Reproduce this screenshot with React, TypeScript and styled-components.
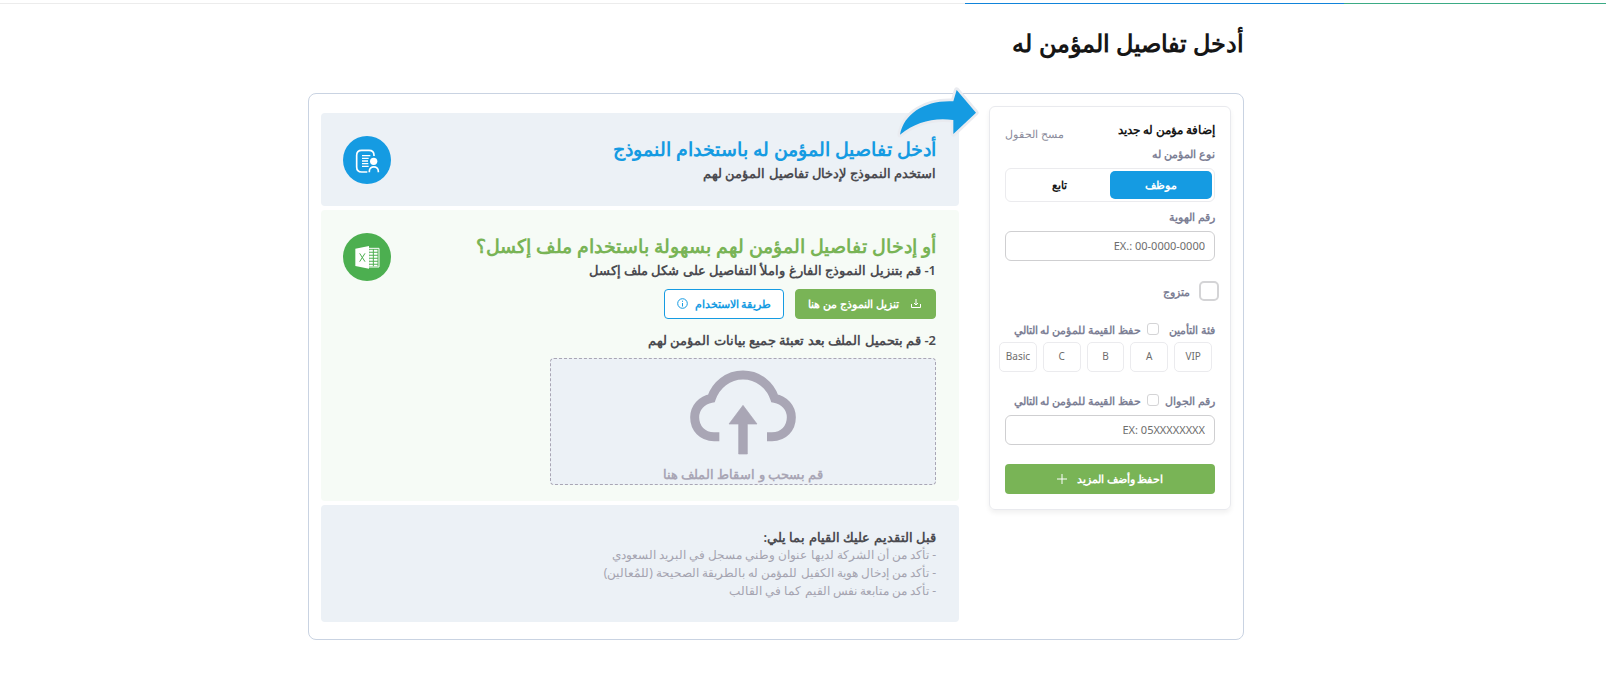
import React, { useState } from 'react';
import styled, { createGlobalStyle } from 'styled-components';

const blue = '#159be2';
const green = '#79b456';

const Global = createGlobalStyle`
  * { box-sizing: border-box; }
  body {
    margin: 0;
    background: #fff;
    color: #161616;
    font-family: 'Noto Sans', sans-serif;
    font-size: 11px;
  }
  h1, h2, h3, p, ul, fieldset { margin: 0; padding: 0; border: 0; list-style: none; }
  button, input { font-family: inherit; font-size: inherit; margin: 0; }
  svg { display: block; flex: none; }
`;

const ProgressBar = styled.div`
  display: flex;
  height: 4px;
  align-items: flex-end;
`;

const ProgressPart = styled.span<{ $color: string; $share: number }>`
  flex: ${(p) => p.$share} 1 0;
  height: 1px;
  background: ${(p) => p.$color};
`;

const Page = styled.main`
  max-width: 990px;
  margin: 0 auto;
  padding: 21px 54px 40px 0;
`;

const Title = styled.h1`
  font-size: 24px;
  font-weight: 600;
  line-height: 36px;
`;

const Panel = styled.div`
  position: relative;
  display: flex;
  align-items: flex-start;
  gap: 30px;
  margin-top: 32px;
  padding: 12px 12px 17px;
  border: 1px solid #c9d3e2;
  border-radius: 8px;
`;

const ArrowSvg = styled.svg`
  position: absolute;
  top: -10px;
  right: 253px;
`;

const Card = styled.form`
  flex: 0 0 242px;
  display: flex;
  flex-direction: column;
  padding: 11px 15px 15px;
  border: 1px solid #e9eaee;
  border-radius: 6px;
  box-shadow: 0 3px 5px rgba(0, 0, 0, 0.06);
  color: #7d8095;
`;

const CardHead = styled.div`
  display: flex;
  justify-content: space-between;
  align-items: flex-end;
`;

const CardTitle = styled.h2`
  color: #161616;
  font-size: 12px;
  font-weight: 600;
  line-height: 24px;
`;

const ClearButton = styled.button`
  padding: 0;
  border: 0;
  background: none;
  color: #8b8c9b;
  line-height: 16px;
  cursor: pointer;
`;

const Field = styled.div<{ $top?: number }>`
  display: flex;
  flex-direction: column;
  gap: 2px;
  margin-top: ${(p) => p.$top ?? 0}px;
`;

const FieldHead = styled.div`
  display: flex;
  align-items: center;
  gap: 6px;
  height: 24px;
  padding-bottom: 2px;
  font-weight: 600;
  white-space: nowrap;
`;

const FieldName = styled.label`
  min-width: 50px;
`;

const KeepLabel = styled.label`
  display: flex;
  align-items: center;
  gap: 6px;
`;

const Check = styled.input.attrs({ type: 'checkbox' })<{ $size: number }>`
  appearance: none;
  flex: none;
  width: ${(p) => p.$size}px;
  height: ${(p) => p.$size}px;
  border: ${(p) => (p.$size > 16 ? 2 : 1)}px solid #d4d4d6;
  border-radius: ${(p) => (p.$size > 16 ? 5 : 3)}px;
  background: #fff;
  &:checked { background: ${blue}; }
`;

const Segments = styled.div`
  display: flex;
  height: 34px;
  padding: 2px;
  border: 1px solid #ebebee;
  border-radius: 6px;
`;

const Choice = styled.label`
  position: relative;
  flex: 1;
  display: flex;
  align-items: center;
  justify-content: center;
  padding-bottom: 2px;
  border-radius: 5px;
  color: #161616;
  font-weight: 600;
  cursor: pointer;
  &:has(input:checked) { background: ${blue}; color: #fff; }
`;

const HiddenInput = styled.input`
  position: absolute;
  inset: 0;
  opacity: 0;
`;

const TextInput = styled.input`
  width: 100%;
  height: 30px;
  padding: 0 9px 2px;
  border: 1px solid #cfcfd1;
  border-radius: 6px;
  text-align: right;
  &::placeholder { color: #6d6d6d; opacity: 1; }
`;

const MarriedLabel = styled.label`
  display: flex;
  align-items: center;
  gap: 9px;
  margin: 20px -4px 0 0;
  font-weight: 600;
`;

const Classes = styled.div`
  display: flex;
  gap: 6px;
  margin: -2px 3px 0 -6px;
`;

const ClassChoice = styled(Choice)`
  height: 30px;
  border: 1px solid #ebebee;
  color: #6d6d6d;
  font-size: 10px;
  font-weight: 400;
`;

const SubmitButton = styled.button`
  display: flex;
  align-items: center;
  justify-content: center;
  gap: 10px;
  height: 30px;
  margin-top: 19px;
  padding-bottom: 2px;
  border: 0;
  border-radius: 4px;
  background: ${green};
  color: #fff;
  font-weight: 700;
  cursor: pointer;
`;

const Guide = styled.div`
  flex: 1;
  min-width: 0;
  display: flex;
  flex-direction: column;
  gap: 4px;
  padding-top: 7px;
`;

const Section = styled.section<{ $tint: string; $bottom: number }>`
  display: flex;
  justify-content: space-between;
  align-items: flex-start;
  padding: 23px 23px ${(p) => p.$bottom}px 22px;
  border-radius: 4px;
  background: ${(p) => p.$tint};
  color: #4b4b50;
`;

const SectionTitle = styled.h2<{ $color: string }>`
  color: ${(p) => p.$color};
  font-size: 19px;
  font-weight: 600;
  line-height: 27px;
`;

const Lead = styled.p`
  font-size: 13px;
  font-weight: 600;
  line-height: 20px;
`;

const Actions = styled.div`
  display: flex;
  gap: 11px;
  margin: 9px 0 11px;
`;

const ActionButton = styled.button<{ $outline?: boolean }>`
  display: flex;
  align-items: center;
  gap: ${(p) => (p.$outline ? 7 : 10)}px;
  height: 30px;
  padding: 0 12px 2px;
  border: 1px solid ${(p) => (p.$outline ? blue : green)};
  border-radius: 4px;
  background: ${(p) => (p.$outline ? '#fff' : green)};
  color: ${(p) => (p.$outline ? blue : '#fff')};
  font-weight: ${(p) => (p.$outline ? 600 : 700)};
  cursor: pointer;
`;

const DropZone = styled.label`
  position: relative;
  display: flex;
  flex-direction: column;
  align-items: center;
  gap: 6px;
  width: 386px;
  max-width: 100%;
  margin-top: 8px;
  padding-top: 9px;
  border: 1px dashed #a9a6b5;
  border-radius: 4px;
  background: #ecf1f6;
  color: #a9a6b5;
  font-size: 13px;
  font-weight: 600;
  line-height: 20px;
`;

const NotesTitle = styled.h3`
  font-size: 13px;
  font-weight: 600;
  line-height: 18px;
`;

const Notes = styled.ul`
  color: #a5a4b0;
  font-size: 12px;
  line-height: 18px;
`;

const CurvedArrow = () => (
  <ArrowSvg width="100" height="60" viewBox="0 0 300 180" aria-hidden="true">
    <path
      d="M30 152C42 88 106 48 190 52L200 18L258 86L190 150V108C130 100 78 114 30 152Z"
      fill={blue}
      stroke="#e9ebf0"
      strokeWidth="16"
      strokeLinejoin="round"
      paintOrder="stroke"
    />
  </ArrowSvg>
);

const FormBadge = () => (
  <svg width="48" height="48" viewBox="21 24 144 144" fill="none" stroke="#fff" strokeWidth="5" aria-hidden="true">
    <circle cx="93" cy="96" r="72" fill={blue} stroke="none" />
    <path d="M94 132H77Q62 132 62 117V82Q62 67 77 67H99Q114 67 114 82V84" />
    <path d="M78 83H103M78 91H98M78 99H96M78 107H97M78 115H98" strokeWidth="4" />
    <circle cx="113" cy="100" r="11" fill="#fff" stroke="none" />
    <path d="M100 133V130C100 112 127 112 127 130V133" />
  </svg>
);

const ExcelBadge = () => (
  <svg width="48" height="48" viewBox="21 20 144 144" aria-hidden="true">
    <circle cx="93" cy="92" r="72" fill="#4caf50" />
    <path d="M58 67L99 59V127L58 119Z" fill="#fff" />
    <path d="M71 81L87 106M87 81L71 106" stroke="#4caf50" strokeWidth="3" />
    <path d="M99 66H129V122H99" fill="none" stroke="#fff" strokeWidth="3" />
    <path d="M105 70V120M119 70V120" stroke="#fff" strokeWidth="11" strokeDasharray="6 3" />
  </svg>
);

const DownloadIcon = () => (
  <svg width="14" height="14" viewBox="0 0 14 14" fill="none" stroke="#fff" aria-hidden="true">
    <path d="M2.5 8V11.5H11.5V8M7 3V9M5 7L7 9L9 7" />
  </svg>
);

const InfoIcon = () => (
  <svg width="11" height="11" viewBox="0 0 11 11" fill="none" stroke={blue} aria-hidden="true">
    <circle cx="5.5" cy="5.5" r="4.8" />
    <path d="M5.5 5V8.5M5.5 2.7V3.8" />
  </svg>
);

const PlusIcon = () => (
  <svg width="10" height="10" viewBox="0 0 10 10" stroke="#fff" aria-hidden="true">
    <path d="M5 0V10M0 5H10" />
  </svg>
);

const CloudIcon = () => (
  <svg width="114" height="90" viewBox="438 80 342 270" aria-hidden="true">
    <path
      d="M538 286H522C487 286 464 261 464 228C464 198 486 176 514 171C528 130 564 101 609 101C654 101 690 130 704 171C732 176 754 198 754 228C754 261 731 286 696 286H681"
      fill="none"
      stroke="#a9a6b5"
      strokeWidth="27"
    />
    <path d="M609 192L651 248H622V338H596V248H567Z" fill="#a9a6b5" stroke="#a9a6b5" strokeWidth="2" strokeLinejoin="round" />
  </svg>
);

const KeepValue = () => (
  <KeepLabel>
    <Check $size={12} />
    حفظ القيمة للمؤمن له التالي
  </KeepLabel>
);

export default function App() {
  const [kind, setKind] = useState('employee');

  return (
    <div dir="rtl" lang="ar">
      <Global />
      <ProgressBar>
        <ProgressPart $color="#3bab85" $share={262} />
        <ProgressPart $color="#1184da" $share={379} />
        <ProgressPart $color="#ececec" $share={965} />
      </ProgressBar>
      <Page>
        <Title>أدخل تفاصيل المؤمن له</Title>
        <Panel>
          <Card onSubmit={(e) => e.preventDefault()}>
            <CardHead>
              <CardTitle>إضافة مؤمن له جديد</CardTitle>
              <ClearButton type="reset">مسح الحقول</ClearButton>
            </CardHead>
            <Field role="radiogroup" aria-labelledby="kind">
              <FieldHead id="kind">نوع المؤمن له</FieldHead>
              <Segments>
                <Choice>
                  <HiddenInput type="radio" name="kind" checked={kind === 'employee'} onChange={() => setKind('employee')} />
                  موظف
                </Choice>
                <Choice>
                  <HiddenInput type="radio" name="kind" checked={kind === 'dependent'} onChange={() => setKind('dependent')} />
                  تابع
                </Choice>
              </Segments>
            </Field>
            <Field $top={3}>
              <FieldHead as="label" htmlFor="identity">رقم الهوية</FieldHead>
              <TextInput id="identity" dir="ltr" placeholder="EX.: 00-0000-0000" />
            </Field>
            <MarriedLabel>
              <Check $size={20} />
              متزوج
            </MarriedLabel>
            <Field $top={17} role="radiogroup" aria-labelledby="class">
              <FieldHead>
                <FieldName as="span" id="class">فئة التأمين</FieldName>
                <KeepValue />
              </FieldHead>
              <Classes>
                {['VIP', 'A', 'B', 'C', 'Basic'].map((name) => (
                  <ClassChoice key={name}>
                    <HiddenInput type="radio" name="class" />
                    {name}
                  </ClassChoice>
                ))}
              </Classes>
            </Field>
            <Field $top={17}>
              <FieldHead>
                <FieldName htmlFor="mobile">رقم الجوال</FieldName>
                <KeepValue />
              </FieldHead>
              <TextInput id="mobile" dir="ltr" placeholder="EX: 05XXXXXXXX" />
            </Field>
            <SubmitButton type="submit">
              احفظ وأضف المزيد
              <PlusIcon />
            </SubmitButton>
          </Card>
          <Guide>
            <Section $tint="#ecf1f6" $bottom={22}>
              <div>
                <SectionTitle $color={blue}>أدخل تفاصيل المؤمن له باستخدام النموذج</SectionTitle>
                <Lead>استخدم النموذج لإدخال تفاصيل المؤمن لهم</Lead>
              </div>
              <FormBadge />
            </Section>
            <Section $tint="#f6fbf6" $bottom={16}>
              <div>
                <SectionTitle $color={green}>أو إدخال تفاصيل المؤمن لهم بسهولة باستخدام ملف إكسل؟</SectionTitle>
                <Lead>1- قم بتنزيل النموذج الفارغ واملأ التفاصيل على شكل ملف إكسل</Lead>
                <Actions>
                  <ActionButton type="button">
                    <DownloadIcon />
                    تنزيل النموذج من هنا
                  </ActionButton>
                  <ActionButton type="button" $outline>
                    طريقة الاستخدام
                    <InfoIcon />
                  </ActionButton>
                </Actions>
                <Lead>2- قم بتحميل الملف بعد تعبئة جميع بيانات المؤمن لهم</Lead>
                <DropZone>
                  <HiddenInput type="file" />
                  <CloudIcon />
                  قم بسحب و اسقاط الملف هنا
                </DropZone>
              </div>
              <ExcelBadge />
            </Section>
            <Section $tint="#ecf1f6" $bottom={22}>
              <div>
                <NotesTitle>قبل التقديم عليك القيام بما يلي:</NotesTitle>
                <Notes>
                  <li>- تأكد من أن الشركة لديها عنوان وطني مسجل في البريد السعودي</li>
                  <li>- تأكد من إدخال هوية الكفيل للمؤمن له بالطريقة الصحيحة (للمُعالين)</li>
                  <li>- تأكد من متابعة نفس القيم كما في القالب</li>
                </Notes>
              </div>
            </Section>
          </Guide>
          <CurvedArrow />
        </Panel>
      </Page>
    </div>
  );
}
